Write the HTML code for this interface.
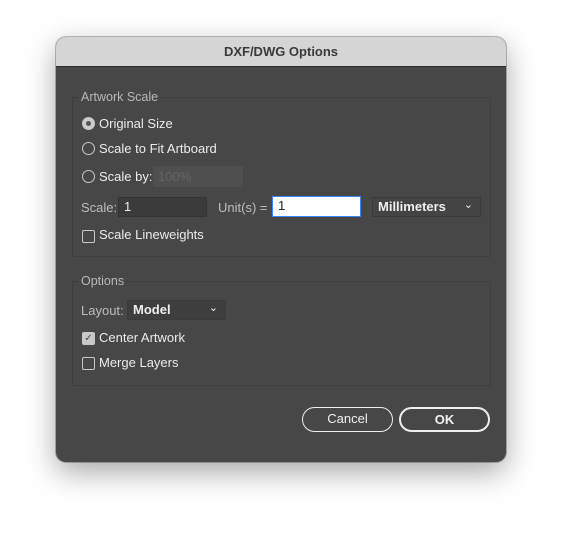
<!DOCTYPE html>
<html><head><style>
body{margin:0;width:562px;height:537px;background:#fff;position:relative;overflow:hidden;font-family:"Liberation Sans",sans-serif;}
.dlg{position:absolute;left:56px;top:37px;width:450px;height:425px;border-radius:10px;background:#474747;box-shadow:0 10px 30px rgba(0,0,0,.35),0 0 0 1px rgba(0,0,0,.25);overflow:hidden}
.tb{height:29px;background:#d5d5d5;border-bottom:1px solid #2a2a2a;text-align:center;line-height:29px;font-size:13px;font-weight:bold;color:#3a3a3a}
.a{position:absolute;font-size:13px;color:#ececec;white-space:nowrap}
.g{color:#bdbdbd}
.box{position:absolute;border:1px solid #3e3e3e;border-radius:2px}
.leg{position:absolute;font-size:12.5px;color:#b8b8b8;background:#474747;padding:0 2px}
.rad{position:absolute;width:11px;height:11px;border:1px solid #c8c8c8;border-radius:50%}
.chk{position:absolute;width:11px;height:11px;border:1px solid #c8c8c8;border-radius:2px}
.in{position:absolute;height:19px;box-sizing:border-box;font-size:13px;line-height:18px;padding-left:5px}
.btn{position:absolute;top:370px;height:25px;box-sizing:border-box;border:1.5px solid #eee;border-radius:13px;text-align:center;line-height:22px;font-size:13px;color:#f2f2f2}
</style></head><body>
<div class="dlg">
<div class="tb">DXF/DWG Options</div>
<div class="box" style="left:16px;top:60px;width:417px;height:158px"></div>
<div class="leg" style="left:23px;top:53px">Artwork Scale</div>
<div class="rad" style="left:26px;top:80px;background:#ccc"><div style="position:absolute;left:3px;top:3px;width:5px;height:5px;border-radius:50%;background:#555"></div></div>
<div class="a" style="left:43px;top:79px">Original Size</div>
<div class="rad" style="left:26px;top:105px"></div>
<div class="a" style="left:43px;top:104px">Scale to Fit Artboard</div>
<div class="rad" style="left:26px;top:133px"></div>
<div class="a" style="left:43px;top:132px">Scale by:</div>
<div class="in" style="left:97px;top:129px;width:90px;height:21px;background:#4f4f4f;color:#666;line-height:21px">100%</div>
<div class="a g" style="left:25px;top:163px">Scale:</div>
<div class="in" style="left:62px;top:160px;width:89px;height:20px;background:#3b3b3b;border:1px solid #333;color:#eee">1</div>
<div class="a g" style="left:162px;top:163px">Unit(s) =</div>
<div class="in" style="left:216px;top:159px;width:89px;height:21px;background:#fff;border:1.5px solid #3b82f6;color:#222">1</div>
<div class="in" style="left:316px;top:160px;width:109px;height:20px;background:#444;border:1px solid #3a3a3a;color:#eee;font-weight:bold">Millimeters<span style="position:absolute;right:7px;top:-2px;font-size:11px;font-weight:normal">&#8964;</span></div>
<div class="chk" style="left:26px;top:193px"></div>
<div class="a" style="left:43px;top:190px">Scale Lineweights</div>
<div class="box" style="left:16px;top:244px;width:417px;height:103px"></div>
<div class="leg" style="left:23px;top:237px">Options</div>
<div class="a g" style="left:25px;top:266px">Layout:</div>
<div class="in" style="left:71px;top:263px;width:99px;height:20px;background:#3e3e3e;border:1px solid #3a3a3a;color:#eee;font-weight:bold">Model<span style="position:absolute;right:7px;top:-2px;font-size:11px;font-weight:normal">&#8964;</span></div>
<div class="chk" style="left:26px;top:295px;background:#c8c8c8;font-size:10px;color:#444;line-height:11px;text-align:center">&#10003;</div>
<div class="a" style="left:43px;top:293px">Center Artwork</div>
<div class="chk" style="left:26px;top:320px"></div>
<div class="a" style="left:43px;top:318px">Merge Layers</div>
<div class="btn" style="left:246px;width:91px">Cancel</div>
<div class="btn" style="left:343px;width:91px;border-width:2px;font-weight:bold">OK</div>
</div>
</body></html>
